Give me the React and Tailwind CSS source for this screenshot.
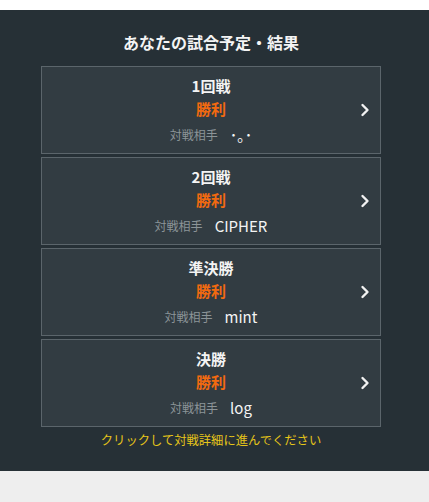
import React from "react";

const matches = [
  { round: "1回戦", result: "勝利", opponent: "･｡･" },
  { round: "2回戦", result: "勝利", opponent: "CIPHER" },
  { round: "準決勝", result: "勝利", opponent: "mint" },
  { round: "決勝", result: "勝利", opponent: "log" },
];

const Chevron = () => (
  <svg width="10" height="14" viewBox="0 0 10 14" fill="none">
    <polyline points="2.5,2 7.5,7 2.5,12" stroke="#f2f2f2" strokeWidth="2.4" strokeLinecap="round" strokeLinejoin="round" />
  </svg>
);

export default function App() {
  return (
    <div
      className="min-h-[502px] bg-[#eeeeee]"
      style={{ fontFamily: '"Noto Sans CJK JP", "Noto Sans", sans-serif' }}
    >
      <div className="h-[10px] bg-white" />
      <div className="bg-[#263036] pt-[20px] pb-[22px] pl-[41px] pr-[48px]">
        <h2 className="text-center text-[16px] font-bold leading-[24px] text-[#f4f4f4]">
          あなたの試合予定・結果
        </h2>
        <div className="mt-[12px] flex flex-col gap-[3px]">
          {matches.map((m) => (
            <div
              key={m.round}
              className="relative h-[88px] border border-[#5b656b] bg-[#323c42] pt-[9px] text-center"
            >
              <div className="text-[15px] font-bold leading-[20px] text-[#f4f4f4]">{m.round}</div>
              <div className="mt-[3px] text-[15px] font-bold leading-[20px] text-[#f26a10]">{m.result}</div>
              <div className="mt-[6px] flex items-center justify-center gap-[12px] leading-[20px]">
                <span className="text-[12px] text-[#8c9498]">対戦相手</span>
                <span className="text-[15px] text-[#f4f4f4]">{m.opponent}</span>
              </div>
              <div className="absolute right-[10px] top-[36px]">
                <Chevron />
              </div>
            </div>
          ))}
        </div>
        <p className="mt-[4px] text-center text-[12.3px] leading-[18px] text-[#e6c619]">
          クリックして対戦詳細に進んでください
        </p>
      </div>
    </div>
  );
}
